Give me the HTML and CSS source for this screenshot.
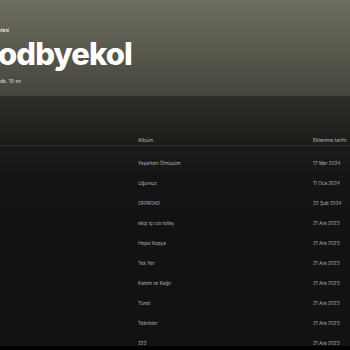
FILE: index.html
```html
<!DOCTYPE html>
<html lang="tr">
<head>
<meta charset="utf-8">
<link rel="stylesheet" href="styles.css">
</head>
<body>
<div class="page">
  <header class="hero">
    <div class="type">Çalma Listesi</div>
    <h1 class="title">odbyekol</h1>
    <div class="meta">dk. 10 sn</div>
  </header>
  <section class="content">
    <div class="actions"></div>
    <div class="thead">
      <span class="c1"></span>
      <span class="c2">Albüm</span>
      <span class="c3">Eklenme tarihi</span>
    </div>
    <div class="rows">
      <div class="row"><span class="c1"></span><span class="c2">Yaşarken Ölmüşüm</span><span class="c3">17 Mar 2024</span></div>
      <div class="row"><span class="c1"></span><span class="c2">Uğursuz</span><span class="c3">11 Oca 2024</span></div>
      <div class="row"><span class="c1"></span><span class="c2">OFFROAD</span><span class="c3">22 Şub 2024</span></div>
      <div class="row"><span class="c1"></span><span class="c2">ekip içi cix tofaş</span><span class="c3">21 Ara 2023</span></div>
      <div class="row"><span class="c1"></span><span class="c2">Hepsi Kopya</span><span class="c3">21 Ara 2023</span></div>
      <div class="row"><span class="c1"></span><span class="c2">Tek Yer</span><span class="c3">21 Ara 2023</span></div>
      <div class="row"><span class="c1"></span><span class="c2">Kalem ve Kağıt</span><span class="c3">21 Ara 2023</span></div>
      <div class="row"><span class="c1"></span><span class="c2">Tünel</span><span class="c3">21 Ara 2023</span></div>
      <div class="row"><span class="c1"></span><span class="c2">Tebrikler</span><span class="c3">21 Ara 2023</span></div>
      <div class="row"><span class="c1"></span><span class="c2">222</span><span class="c3">21 Ara 2023</span></div>
    </div>
  </section>
</div>
</body>
</html>
```

FILE: styles.css
```css
* { box-sizing: border-box; }
html, body {
  margin: 0;
  padding: 0;
  background: #000;
  width: 350px;
  height: 350px;
  overflow: hidden;
}
body {
  font-family: Inter, "Liberation Sans", sans-serif;
  color: #fff;
}
.page {
  height: 346px;
  overflow: hidden;
  background: #121212;
  display: flex;
  flex-direction: column;
}
.hero {
  height: 96px;
  flex: none;
  background: linear-gradient(180deg, #6d6d61 0%, #4a4a40 88%, #47473d 100%);
  padding-top: 27px;
  display: flex;
  flex-direction: column;
  align-items: flex-start;
  overflow: hidden;
}
.type {
  font-size: 5px;
  line-height: 6px;
  margin-left: -22px;
  color: #fff;
}
.title {
  margin: 4px 0 0 -2px;
  font-size: 31px;
  line-height: 34px;
  font-weight: 800;
  letter-spacing: -0.9px;
  color: #fff;
}
.meta {
  margin-top: 7px;
  font-size: 5px;
  line-height: 6px;
  color: #e0e0da;
}
.content {
  flex: 1;
  background: linear-gradient(180deg, #2e2e29 0px, #1c1c1a 45px, #141414 85px, #121212 120px);
}
.actions { height: 38px; }
.thead, .row {
  display: grid;
  grid-template-columns: 138px 175px 1fr;
  align-items: center;
  white-space: nowrap;
  overflow: hidden;
}
.thead {
  height: 12px;
  font-size: 5px;
  color: #b3b3b3;
  border-bottom: 1px solid #2a2a2a;
}
.rows { padding-top: 7px; }
.row {
  height: 20px;
  font-size: 4.7px;
  color: #b3b3b3;
}
```
